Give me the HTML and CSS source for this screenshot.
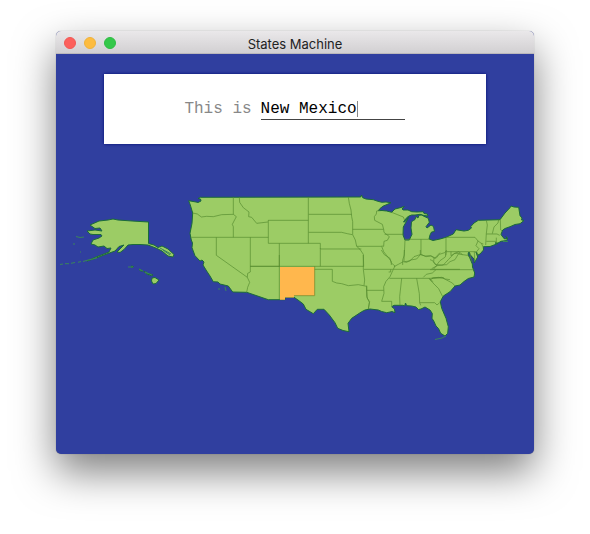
FILE: index.html
```html
<!DOCTYPE html>
<html lang="en">
<head>
<meta charset="utf-8">
<title>States Machine</title>
<link rel="stylesheet" href="styles.css">
</head>
<body>
<main class="window">
  <header class="titlebar">
    <div class="controls">
      <button class="control close" type="button" aria-label="Close"></button>
      <button class="control minimize" type="button" aria-label="Minimize"></button>
      <button class="control expand" type="button" aria-label="Zoom"></button>
    </div>
    <h1 class="title">States Machine</h1>
  </header>
  <div class="content">
    <form class="card">
      <label class="prompt" for="state">This is</label>
      <input class="answer" id="state" type="text" value="New Mexico" size="15" autocomplete="off" spellcheck="false">
      <span class="caret"></span>
    </form>
    <svg class="map" viewBox="56 190 478 152" role="img" aria-label="Map of the United States">
      <g class="land">
        <!-- Contiguous states -->
        <path d="M200.3 197.3L360.7 197 361.5 195 362.7 197.7 366 199 373.3 199.7 377 201 381.7 202.3 386 202 391 202.7 387 204.5 383.3 206 380 208.5 378.3 210.7 382 210.5 386.7 211 391.7 212.3 395 209 399 208 404.3 206.5 402 209 403.3 210 408 210 411.7 211.7 417 212 423.3 211.7 424 213.5 427.3 214 428 216 424 215.5 420 214.3 415 215 411.7 215 409 216 406.7 217.7 403.5 222 405 221.7 408.5 217.5 405.5 223 403.3 227 403 235 405 240 409.3 240 412 234.3 411 228 411.5 221.7 413.5 220.5 415 219.5 416 216.5 418 218 419 215.2 421.7 215 424 216.3 428.3 218.3 429.3 222.3 426 226.7 427 228 431 225 433.5 226.5 434.5 231.5 431.5 232 430 235 429 239 433 240.5 440 239 446 237.3 453.3 234 456 229.7 464 231 468.3 230.3 471.5 228 470.7 226.7 474 223 478.3 220.3 500 219.7 505 213 510 207.7 511 206 514 207 518.7 207.3 520 215.7 522 218 521.5 220 524 220.5 520 223.7 515 224.5 510 226.7 505 228.5 502.7 230 501 234.3 502 236 504.5 239 507 238.5 506 236.5 507.5 238 506.7 240.5 501 241.3 498 243 495 243 498 243.5 490 246.5 483.3 246.7 483.5 250 480 254 478 255 476 252 477.7 257 474.3 263 474 259 470 254.5 469 252 468 254 470 258.5 472.3 264 472.5 267 474.7 273 474 277 468.3 278.5 464 281.5 460 285 455 286 450 291.7 443.3 296 440.3 301.7 441.7 308.3 446 318.3 448.3 326.7 447.7 333.3 445 336 440.7 333.3 438.5 328.5 436 326 434 321.5 432 318.3 432.3 313.5 430 310 425 307 421 309 418.5 309.5 416 307 411.7 306 406.7 305.7 405.5 303 404.7 306 402.7 305.3 394 305.3 391.7 306.7 394.5 309 395 312.7 392 311.5 390 312 386.7 312.7 381.7 311.5 378.3 310 370 309 365 310 361.7 311.7 351.7 318.3 348 323.3 349 331.7 343 330.5 337.7 328.3 335 322.7 329.3 315 324 309.3 317.3 309.3 313.3 313.7 306 309.3 303.3 304 298 300 294 297.3 285 297.3 285 299.7 268.3 299.7 246.7 292.3 232.7 292 228.3 286 220 284 218 282 213.3 281.7 210 276 206.7 271 203 265 204 262 202 260 200 261 195 255.7 192 247.7 192.5 243 191.3 240 190 233.3 192 223.3 192.7 213 190.3 205 188.7 200.7 196 202 198 202.5 201 201 200.5 199 198 198.5Z"/>
        <!-- Alaska -->
        <path d="M90 225L99 221 108 220 113 219 118 220 132 221 148.5 222V243.5L154 245 158 247.5 162 246 168 249 174 254.5 173 257 168 256 162 251 157 248.5 148 245 140 244.5 133 244.5 128 245 124 249.5 120 252.5 117 252 121 248 124 245 119 246.5 115 251 108 253.5 100 256.5 95 258.5 87 261 96 257 104 254 109 252 111 248 107 248.5 104 246 98 247 95 245 91 244 93 240 99 238 102 236 101 234.5 93 234.5 90 234 87 231 95 230 102 231 100 228 95 228.5Z"/>
        <!-- Hawaii -->
        <path d="M152 278L155 277.5 159 280 156 283.5 153 284 151.5 281ZM139 269L143 271 140.5 271ZM144 271.5L147 272.5 149 275 146 273.5ZM149 273.5L153 275 150 275.5ZM131 266L133.5 266.5 132 268Z"/>
      </g>
      <path class="islands" d="M60 264.500L63 264M65 263.700H69M71 263.300L75 262.500M78 262.300L81 261.500M83 261.500L87 260.300 97 258M76 236.500L80 237.500 84 237M73 244H75M80 252H81M218 289H220M225 287L226 291M435 339.500L442 338 446 336M503 241.500H508M128 267H133M139 269L143 271M145 272L152 275M163 250L170 255M160 248L171 254"/>
      <path class="selected" d="M280 267H315V296H294V297.500H285V299.700H280Z"/>
      <g class="borders">
        <!-- Pacific and mountain states -->
        <path transform="translate(180 185) scale(.3333)" d="M38 84L52 87 64 96 80 94 100 95 125 89 160 88M160 36V88L169 95 157 118 160 125V157M34 157H265M178 36L179 52 190 68 207 81 206 95 215 97 230 115 264 111M265 105V175M109 157V211L202 277M211 157V261L203 265 202 277 209 292 203 307 200 322M211 244H300"/>
        <!-- Great Plains -->
        <path transform="translate(270 185) scale(.3333)" d="M115 36V175M-5 106H115M-5 175H151V192M116 88H245M116 142H215L232 146 247 149M151 192H274M28 175V245M235 36L238 55 243 75 245 95 248 110V149L256 165 260 184 270 193 280 208 281 245"/>
        <!-- Southern Plains -->
        <path transform="translate(270 255) scale(.3333)" d="M-60 34H281M28 0V133M151 -20V34M134 34V122H72M134 43H187V79L200 84 215 86 235 92 265 89 290 94M280 0V43L284 75 282 92M290 94V125L298 142 295 162M281 43H370"/>
        <!-- Upper Midwest -->
        <path transform="translate(340 185) scale(.3333)" d="M38 133H131L132 142 148 155 142 166 132 169 131 184 125 183M50 184H125L131 200 145 218 154 229 154 240M131 133L127 118 104 106 103 95 109 87 110 78 119 76M155 82L190 96 194 106M134 148H190M195 165L193 210 188 225 188 240M195 163H270M243 163V208M193 230L210 228 222 215 243 208 258 215 273 213 284 220 300 203"/>
        <!-- Northeast and mid-Atlantic -->
        <path transform="translate(430 195) scale(.3333)" d="M48 127V170H140M48 127H135L144 138 154 145 160 157M144 138L138 152 147 161 140 170 144 181M154 145L160 147M169 76L172 90 169 116 167 150M206 74L204 84 192 96 187 116M211 72L212 105 216 108M169 117H201L209 121M169 139H199M199 128V144M48 170V181M48 170L46 186 30 197 20 210 15 208 8 197 0 194M63 170V182L75 175 86 170 98 179 112 181 125 192M98 179L85 177 75 194 60 200 50 209 35 210 22 209M10 223L22 209M0 224H131M0 255L10 249 35 247 46 252 60 254M120 174L122 190 127 200M133 170L134 195"/>
        <!-- South -->
        <path transform="translate(350 250) scale(.3333)" d="M50 121H101M50 107V121L52 145 59 155 55 177M94 0L103 14 120 25 123 38 135 48 130 58 120 80 108 94 101 110 102 130 95 154H125V168M122 58V66H116M130 58H330M118 85H245L265 82 282 84M220 82L229 73 247 69 258 59M155 85L149 140 150 166M200 85L208 131 209 158H254L261 165 269 158M209 158L212 166M237 86L247 97 266 116 277 138M238 85L250 96M245 84L278 84 307 99 315 108M132 50L145 43 160 35 170 37 182 30 200 27 211 14 211 0M211 14L225 18 242 17 258 25 268 13 284 8 290 0M252 24L251 36 262 47 245 56M262 47L280 45 295 29 313 10 330 10M163 0L162 34"/>
      </g>
    </svg>
  </div>
</main>
</body>
</html>
```

FILE: styles.css
```css
* {
  box-sizing: border-box;
}

body {
  margin: 0;
  min-height: 100vh;
  padding: 31px 56px 80px;
  display: flex;
  background: #fff;
  font-family: Inter, "Liberation Sans", sans-serif;
}

.window {
  flex: 1;
  min-width: 0;
  display: flex;
  flex-direction: column;
  border-radius: 5px;
  overflow: hidden;
  background: #303f9f;
  box-shadow: 0 0 1px rgba(0, 0, 0, 0.4), 0 18px 40px rgba(0, 0, 0, 0.5);
}

.titlebar {
  display: grid;
  grid-template-columns: 1fr auto 1fr;
  align-items: center;
  height: 23px;
  padding: 0 8px;
  border-bottom: 1px solid #bbb8bb;
  background: linear-gradient(#eae8ea, #d2d0d2);
}

.controls {
  display: flex;
  gap: 8px;
}

.control {
  width: 12px;
  height: 12px;
  padding: 0;
  border: 1px solid;
  border-radius: 50%;
}

.close {
  background: #fc605c;
  border-color: #f25854;
}

.minimize {
  background: #fdbc40;
  border-color: #f0b23a;
}

.expand {
  background: #34c84a;
  border-color: #2fbd43;
}

.title {
  margin: 0;
  padding-top: 2px;
  font-size: 13px;
  line-height: 22px;
  font-weight: 400;
  color: #222;
}

.content {
  flex: 1;
  display: flex;
  flex-direction: column;
  align-items: center;
  gap: 46px;
  padding-top: 20px;
}

.card {
  width: 80%;
  height: 70px;
  display: flex;
  align-items: center;
  justify-content: center;
  background: #fff;
  box-shadow: 0 0 3px #000b70;
  font-family: "Liberation Mono", monospace;
  font-size: 16px;
}

.prompt {
  margin-right: 9px;
  color: #888;
}

.answer {
  width: 15ch;
  height: 22px;
  padding: 0;
  border: 0;
  border-bottom: 1px solid #444;
  border-radius: 0;
  outline: 0;
  background: none;
  color: #000;
  font: inherit;
}

.caret {
  width: 1px;
  height: 16px;
  margin-left: -5ch;
  margin-right: 5ch;
  background: #888;
}

.map {
  display: block;
  width: 100%;
}

.land {
  fill: #9ccc65;
  stroke: #1b6b3a;
  stroke-width: 1px;
  stroke-linejoin: round;
}

.islands {
  fill: none;
  stroke: #39845b;
  stroke-width: 1px;
}

.selected {
  fill: #ffb74d;
}

.borders path {
  fill: none;
  stroke: #558b2f;
  stroke-width: 2px;
  stroke-linejoin: round;
}
```
